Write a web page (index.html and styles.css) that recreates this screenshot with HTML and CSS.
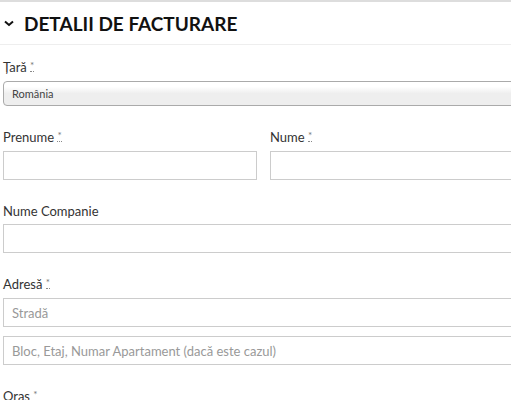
FILE: index.html
```html
<!DOCTYPE html>
<html lang="ro">
<head>
  <meta charset="UTF-8">
  <meta name="viewport" content="width=device-width, initial-scale=1.0">
  <title>Detalii de facturare</title>
  <link rel="stylesheet" href="styles.css">
</head>
<body>
  <div class="top-bar"></div>
  <h3 class="section-title">
    <svg class="chevron" width="10" height="7" viewBox="0 0 10 7"><path d="M1 1.5 L5 5 L9 1.5" fill="none" stroke="#111" stroke-width="2"/></svg>
    DETALII DE FACTURARE
  </h3>

  <form class="billing">
    <p class="field">
      <label>Țară <abbr class="required" title="obligatoriu">*</abbr></label>
      <span class="select">România</span>
    </p>

    <div class="row">
      <p class="field half">
        <label>Prenume <abbr class="required" title="obligatoriu">*</abbr></label>
        <input type="text">
      </p>
      <p class="field half">
        <label>Nume <abbr class="required" title="obligatoriu">*</abbr></label>
        <input type="text">
      </p>
    </div>

    <p class="field">
      <label>Nume Companie</label>
      <input type="text">
    </p>

    <p class="field">
      <label>Adresă <abbr class="required" title="obligatoriu">*</abbr></label>
      <input type="text" placeholder="Stradă">
      <input type="text" class="second" placeholder="Bloc, Etaj, Numar Apartament (dacă este cazul)">
    </p>

    <p class="field">
      <label>Oras <abbr class="required plain" title="obligatoriu">*</abbr></label>
    </p>
  </form>
</body>
</html>
```

FILE: styles.css
```css
* { box-sizing: border-box; }
html, body {
  overflow: hidden;
}
body {
  font-family: Lato, 'Open Sans', sans-serif;
  background: #fff;
  color: #333;
  margin: 0;
  padding: 0;
  width: 540px;
  height: 400px;
}
.top-bar {
  height: 2px;
  background: #ddd;
}
.section-title {
  display: flex;
  align-items: center;
  gap: 10px;
  margin: 0;
  height: 43px;
  padding-left: 4px;
  font-size: 19px;
  font-weight: 700;
  color: #111;
  border-bottom: 1px solid #eee;
}
.billing {
  width: 524px;
  padding: 12px 0 0 3px;
}
.field {
  margin: 0 0 21px;
}
.field label {
  display: block;
  font-size: 13px;
  line-height: 20px;
  color: #333;
  margin-bottom: 3px;
}
.required {
  color: #777;
  font-size: 10px;
  text-decoration: none;
  border-bottom: 1px dotted #888;
  position: relative;
  top: -3px;
}
.required.plain {
  border-bottom: none;
}
.select {
  display: block;
  height: 25px;
  line-height: 23px;
  padding-left: 8px;
  font-size: 11px;
  color: #444;
  border: 1px solid #aaa;
  border-radius: 4px;
  background: linear-gradient(#fff 20%, #eee 50%);
}
.row {
  display: flex;
  gap: 13px;
}
.half {
  flex: 1;
}
input[type="text"] {
  display: block;
  width: 100%;
  height: 29px;
  border: 1px solid #ccc;
  padding: 0 8px;
  font-family: Lato, sans-serif;
  font-size: 13px;
  color: #444;
  outline: none;
}
input::placeholder {
  color: #999;
}
input.second {
  margin-top: 9px;
}
```
